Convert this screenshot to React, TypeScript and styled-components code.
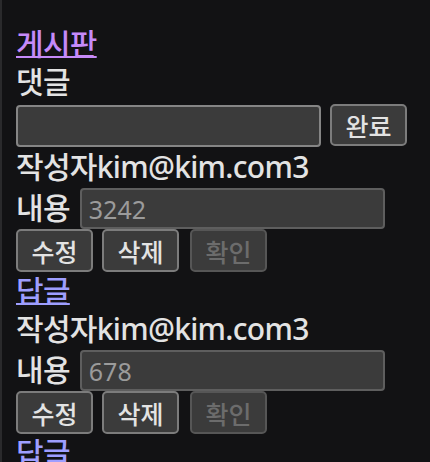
import React from "react";
import styled, { createGlobalStyle } from "styled-components";

const FONT = `"Noto Sans", "Noto Sans CJK KR", sans-serif`;

const Global = createGlobalStyle`
  html, body {
    margin: 0;
    padding: 0;
    background: #121214;
    overflow: hidden;
  }
  body {
    font-family: ${FONT};
    color: #e3e3e3;
  }
`;

const Page = styled.div`
  height: 462px;
  overflow: hidden;
  box-sizing: border-box;
  border-left: 2px solid #2a2a2c;
  padding: 25px 0 0 14px;
  display: flex;
  flex-direction: column;
  align-items: flex-start;
`;

const TextLine = styled.div`
  height: 38px;
  line-height: 38px;
  font-size: 30px;
  font-weight: 500;
  letter-spacing: -0.7px;
  white-space: nowrap;
`;

const NavLink = styled.a<{ $visited?: boolean }>`
  display: block;
  height: 38px;
  line-height: 38px;
  font-size: 30px;
  font-weight: 500;
  letter-spacing: -0.7px;
  color: ${(p) => (p.$visited ? "#c58af9" : "#9e9eff")};
  text-decoration: underline;
  text-decoration-thickness: 2px;
  cursor: pointer;
`;

const FormRow = styled.div<{ $gap: number; $top: number; $bottom: number }>`
  display: flex;
  align-items: baseline;
  gap: ${(p) => p.$gap}px;
  margin: ${(p) => p.$top}px 0 ${(p) => p.$bottom}px;
`;

const ButtonRow = styled.div`
  display: flex;
  gap: 9px;
`;

const Label = styled.span`
  font-size: 30px;
  line-height: 30px;
  font-weight: 500;
  letter-spacing: -0.7px;
`;

const Field = styled.input<{ $height: number }>`
  box-sizing: border-box;
  width: 305px;
  height: ${(p) => p.$height}px;
  margin: 0;
  padding: 0 7px;
  font-family: ${FONT};
  font-size: 25px;
  color: #e3e3e3;
  background: #3b3b3b;
  border: 2px solid #858585;
  border-radius: 4px;
  outline: none;

  &:disabled {
    color: #9b9b9b;
    border-color: #5e5e5e;
  }
`;

const Button = styled.button<{ $height: number }>`
  box-sizing: border-box;
  width: 77px;
  height: ${(p) => p.$height}px;
  margin: 0;
  padding: 0;
  font-family: ${FONT};
  font-size: 25px;
  font-weight: 500;
  color: #e3e3e3;
  background: #3b3b3b;
  border: 2px solid #7c7c7c;
  border-radius: 5px;

  &:disabled {
    color: #6c6c6c;
    border-color: #565656;
    margin-left: 2px;
  }
`;

type Reply = { author: string; content: string };

const replies: Reply[] = [
  { author: "kim@kim.com3", content: "3242" },
  { author: "kim@kim.com3", content: "678" },
];

function ReplyItem({ r }: { r: Reply }) {
  return (
    <>
      <TextLine>작성자{r.author}</TextLine>
      <FormRow $gap={10} $top={2} $bottom={0}>
        <Label>내용</Label>
        <Field $height={41} disabled defaultValue={r.content} />
      </FormRow>
      <ButtonRow>
        <Button $height={43}>수정</Button>
        <Button $height={43}>삭제</Button>
        <Button $height={43} disabled>
          확인
        </Button>
      </ButtonRow>
      <NavLink>답글</NavLink>
    </>
  );
}

export default function App() {
  return (
    <>
      <Global />
      <Page>
        <NavLink $visited>게시판</NavLink>
        <TextLine>댓글</TextLine>
        <FormRow $gap={9} $top={3} $bottom={1}>
          <Field $height={42} />
          <Button $height={42}>완료</Button>
        </FormRow>
        {replies.map((r, i) => (
          <ReplyItem key={i} r={r} />
        ))}
      </Page>
    </>
  );
}
